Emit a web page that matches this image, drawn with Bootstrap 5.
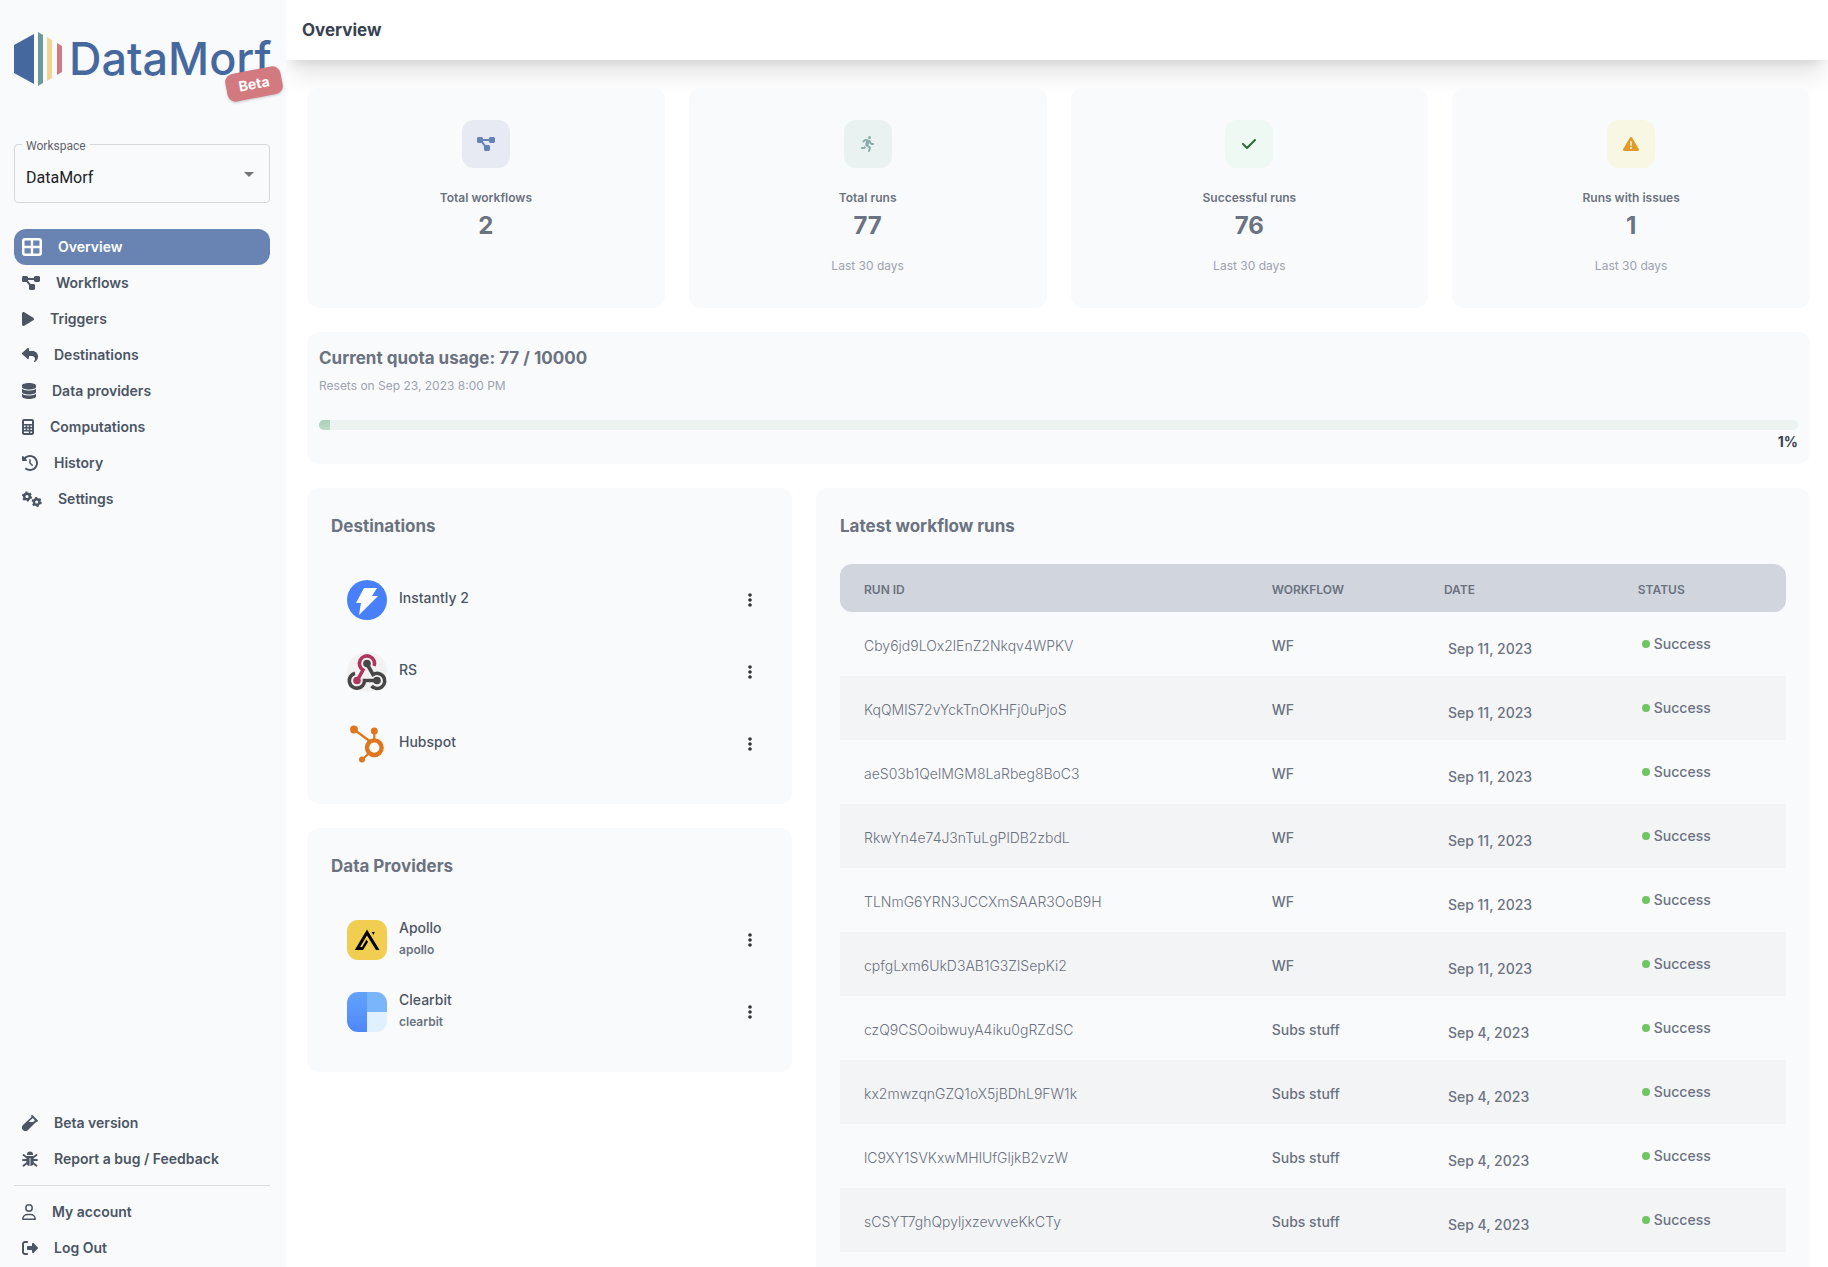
<!DOCTYPE html>
<html lang="en">
<head>
<meta charset="utf-8">
<meta name="viewport" content="width=device-width, initial-scale=1">
<title>DataMorf - Overview</title>
<link href="https://cdn.jsdelivr.net/npm/bootstrap@5.3.0/dist/css/bootstrap.min.css" rel="stylesheet">
<style>
  body { font-family: Inter, "Noto Sans", sans-serif; font-size: 14px; line-height: 20px; color: #6b7280; background: #fff; }
  svg { display: block; flex: none; }
  .app-shell { height: 100vh; overflow: hidden; }
  .side-panel { width: 286px; flex: none; background: #f9fafc; padding: 32px 16px 1px 14px; }
  .brand { height: 54px; margin-bottom: 58px; gap: 6px; }
  .brand-text { font-size: 45px; line-height: 54px; font-weight: 500; color: #45689f; }
  .beta-tag { top: 38px; right: -12px; width: 56px; height: 28px; line-height: 28px; border-radius: 8px; background: #d37a80; color: #fff; font-weight: 700; transform: rotate(-11deg); box-shadow: 0 1px 3px rgba(0,0,0,.2); text-align: center; }
  .ws-box { margin-bottom: 26px; }
  .ws-select { height: 59px; border: 1px solid #d5d7da; border-radius: 4px; background: transparent; appearance: none; padding: 8px 40px 0 11px; font: 16px/24px Roboto, sans-serif; color: #202124; }
  .ws-label { left: 8px; top: -7px; padding: 0 4px; background: #f9fafc; font: 12px/18px Roboto, sans-serif; color: #5f6368; }
  .ws-arrow { right: 15px; top: 28px; pointer-events: none; }
  .side-nav .nav-link { height: 36px; padding: 0 8px; gap: 16px; display: flex; align-items: center; border-radius: 12px; font-weight: 600; color: #4b5563; }
  .side-nav .nav-link.active { background: #6984b2; color: #fff; }
  .side-nav svg, .stat-icon svg { fill: currentColor; }
  .side-rule { margin: 8px 0; border-top: 1px solid #d9dce1; opacity: 1; }
  .top-bar { height: 60px; flex: none; padding: 0 16px; background: #fff; box-shadow: 0 20px 25px -5px rgba(0,0,0,.1), 0 8px 10px -6px rgba(0,0,0,.1); }
  .top-bar h1 { font-size: 17px; line-height: 28px; font-weight: 700; color: #374151; margin: 0; }
  .content-area { position: relative; padding: 28px 18px 24px 21px; display: flex; flex-direction: column; gap: 24px; }
  .panel { background: #f9fafc; border-radius: 12px; }
  .panel-title { font-size: 17px; line-height: 28px; font-weight: 700; color: #6b7280; margin: 0; }
  .stat-panel { height: 220px; padding-top: 32px; text-align: center; font-size: 12px; line-height: 16px; }
  .stat-icon { width: 48px; height: 48px; border-radius: 12px; margin: 0 auto 22px; display: flex; align-items: center; justify-content: center; }
  .stat-name { font-weight: 600; }
  .stat-value { font-size: 24px; line-height: 32px; font-weight: 700; margin: 4px 0 16px; }
  .muted-note { font-size: 12px; line-height: 16px; color: #9ca3af; font-weight: 400; }
  .quota-panel { padding: 12px; height: 132px; }
  .quota-note { margin-top: 6px; }
  .quota-track { height: 10px; border-radius: 5px; background: #ebf2ef; margin-top: 26px; }
  .quota-fill { background: linear-gradient(#a9d0b6, #bfdcc8); }
  .quota-pct { color: #374151; font-weight: 700; text-align: right; margin-top: 2px; }
  .conn-row { height: 72px; padding: 0 6px 0 16px; gap: 12px; color: #4b5563; font-weight: 500; }
  .conn-sub { font-size: 12px; line-height: 24px; color: #6b7280; font-weight: 600; }
  .dots-btn { width: 24px; height: 40px; border: 0; background: none; padding: 0; display: flex; align-items: center; justify-content: center; }
  .runs-table { width: 100%; table-layout: fixed; border-collapse: separate; border-spacing: 0; font-weight: 500; }
  .runs-table th { height: 48px; padding: 4px 24px 0; background: #d1d5dd; font-size: 12px; font-weight: 600; }
  .runs-table th:first-child { border-radius: 12px 0 0 12px; }
  .runs-table th:last-child { border-radius: 0 12px 12px 0; }
  .runs-table td { height: 64px; padding: 4px 24px 0; vertical-align: middle; }
  .runs-table tbody tr:nth-child(even) td { background: #f3f4f6; }
  .runs-table td:first-child { font-weight: 300; }
  .runs-table td:nth-child(3) { padding: 10px 28px 0; }
  .runs-table td:nth-child(4) { padding: 0 28px 0; }
  .ok-dot { display: inline-block; width: 8px; height: 8px; border-radius: 50%; background: #70c463; margin-right: 4px; vertical-align: 1px; }
</style>
<script src="https://cdn.jsdelivr.net/npm/bootstrap@5.3.0/dist/js/bootstrap.bundle.min.js"></script>
</head>
<body>
<svg width="0" height="0" class="position-absolute" aria-hidden="true">
  <symbol id="i-flow" viewBox="0 0 576 512"><path d="M0 80C0 53.500 21.500 32 48 32h96c26.500 0 48 21.500 48 48V96H384V80c0-26.500 21.500-48 48-48h96c26.500 0 48 21.500 48 48v96c0 26.500-21.500 48-48 48H432c-26.500 0-48-21.500-48-48V160H192v16c0 1.700-.1 3.400-.3 5L272 288h96c26.500 0 48 21.500 48 48v96c0 26.500-21.500 48-48 48H272c-26.500 0-48-21.500-48-48V336c0-1.700.1-3.400.3-5L144 224H48c-26.500 0-48-21.500-48-48V80z"/></symbol>
  <symbol id="i-dots" viewBox="0 0 4 16"><circle cx="2" cy="3" r="1.800"/><circle cx="2" cy="8" r="1.800"/><circle cx="2" cy="13" r="1.800"/></symbol>
</svg>
<div class="app-shell d-flex">
  <aside class="side-panel d-flex flex-column">
    <div class="brand d-flex position-relative">
      <svg width="49" height="54" viewBox="0 0 49 54"><path fill="#45689f" d="M0 13 20 2v50L0 41z"/><path fill="#6c9a97" d="M24 0l5 3v48l-5 3z"/><path fill="#f1d592" d="M33 5l5 3v38l-5 3z"/><path fill="#d37a80" d="M43 11l5 3v26l-5 3z"/></svg>
      <span class="brand-text">DataMorf</span>
      <span class="beta-tag position-absolute">Beta</span>
    </div>
    <div class="ws-box position-relative">
      <label class="ws-label position-absolute" for="workspace">Workspace</label>
      <select class="ws-select w-100" id="workspace"><option>DataMorf</option></select>
      <svg class="ws-arrow position-absolute" width="12" height="6" viewBox="0 0 12 6"><path fill="#757575" d="M1 0h10L6 5z"/></svg>
    </div>
    <nav class="side-nav nav flex-column">
      <a class="nav-link active" href="#"><svg width="20" height="18" viewBox="0 0 20 18"><path fill-rule="evenodd" d="M3 0h14a3 3 0 0 1 3 3v12a3 3 0 0 1-3 3H3a3 3 0 0 1-3-3V3a3 3 0 0 1 3-3zM2.500 3v4.800h6.300V2.500H3zM11.200 2.500v5.300h6.300V3L17 2.500zM2.500 10.200V15l.5.500h5.800v-5.300zM11.200 10.200v5.300H17l.5-.5v-4.800z"/></svg>Overview</a>
      <a class="nav-link" href="#"><svg width="18" height="16"><use href="#i-flow"/></svg>Workflows</a>
      <a class="nav-link" href="#"><svg width="12" height="16" viewBox="0 0 384 512"><path d="M73 39c-14.800-9.100-33.400-9.400-48.500-.9S0 62.600 0 80V432c0 17.400 9.400 33.400 24.500 41.900s33.700 8.100 48.500-.9L361 297c14.300-8.700 23-24.200 23-41s-8.700-32.200-23-41L73 39z"/></svg>Triggers</a>
      <a class="nav-link" href="#"><svg width="16" height="16" viewBox="0 0 512 512"><path d="M205 34.800c11.500 5.100 19 16.600 19 29.200v64H336c97.200 0 176 78.800 176 176c0 113.300-81.500 163.900-100.200 174.100c-2.500 1.400-5.300 1.900-8.100 1.900c-10.900 0-19.700-8.900-19.700-19.700c0-7.500 4.300-14.400 9.800-19.500c9.400-8.800 22.200-26.400 22.200-56.700c0-53-43-96-96-96H224v64c0 12.600-7.400 24.100-19 29.200s-25 3-34.400-5.400l-160-144C3.900 225.700 0 217.100 0 208s3.900-17.700 10.600-23.800l160-144c9.400-8.500 22.900-10.600 34.400-5.400z"/></svg>Destinations</a>
      <a class="nav-link" href="#"><svg width="14" height="16" viewBox="0 0 448 512"><path d="M448 80v48c0 44.200-100.300 80-224 80S0 172.200 0 128V80C0 35.800 100.300 0 224 0S448 35.800 448 80zM393.200 214.700c20.800-7.400 39.900-16.900 54.800-28.600V288c0 44.200-100.300 80-224 80S0 332.200 0 288V186.100c14.900 11.800 34 21.200 54.800 28.600C99.700 230.700 159.500 240 224 240s124.300-9.300 169.200-25.300zM0 346.100c14.900 11.800 34 21.200 54.800 28.600C99.700 390.700 159.500 400 224 400s124.300-9.300 169.200-25.300c20.800-7.400 39.900-16.900 54.800-28.600V432c0 44.200-100.300 80-224 80S0 476.200 0 432V346.100z"/></svg>Data providers</a>
      <a class="nav-link" href="#"><svg width="12" height="16" viewBox="0 0 384 512"><path fill-rule="evenodd" d="M64 0C28.700 0 0 28.700 0 64V448c0 35.300 28.700 64 64 64H320c35.300 0 64-28.700 64-64V64c0-35.300-28.700-64-64-64zM64 64H320v96H64zM64 208h50v50H64zM167 208h50v50h-50zM270 208h50v50h-50zM64 303h50v50H64zM167 303h50v50h-50zM270 303h50v50h-50zM64 398h153v50H64zM270 398h50v50h-50z"/></svg>Computations</a>
      <a class="nav-link" href="#"><svg width="16" height="16" viewBox="0 0 512 512"><path d="M75 75L41 41C25.900 25.900 0 36.600 0 57.900V168c0 13.300 10.700 24 24 24H134.100c21.400 0 32.100-25.900 17-41l-30.800-30.800C155 85.500 203 64 256 64c106 0 192 86 192 192s-86 192-192 192c-40.800 0-78.600-12.700-109.700-34.400c-14.500-10.100-34.400-6.600-44.600 7.900s-6.600 34.400 7.900 44.600C151.200 495 201.700 512 256 512c141.400 0 256-114.600 256-256S397.400 0 256 0C185.300 0 121.300 28.700 75 75zm181 53c-13.300 0-24 10.700-24 24V256c0 6.400 2.500 12.500 7 17l72 72c9.400 9.400 24.600 9.400 33.900 0s9.400-24.600 0-33.900l-65-65V152c0-13.300-10.700-24-24-24z"/></svg>History</a>
      <a class="nav-link" href="#"><svg width="20" height="16" viewBox="0 0 20 16"><g fill="none" stroke="currentColor"><circle cx="5" cy="5.500" r="2.800" stroke-width="2.400"/><circle cx="5" cy="5.500" r="4.200" stroke-width="1.800" stroke-dasharray="2.200 2.200"/><circle cx="14.700" cy="11" r="2.800" stroke-width="2.400"/><circle cx="14.700" cy="11" r="4.200" stroke-width="1.800" stroke-dasharray="2.200 2.200"/></g></svg>Settings</a>
    </nav>
    <nav class="side-nav nav flex-column mt-auto">
      <a class="nav-link" href="#"><svg width="16" height="16" viewBox="0 0 16 16"><path fill-rule="evenodd" d="M9.300.3a1 1 0 0 1 1.400 0l5 5a1 1 0 0 1-1.400 1.400L6 15a3.500 3.500 0 0 1-5-5l8.700-8.300a1 1 0 0 1-.4-1.400zM6.600 7h4.600l1.700-1.700L10.700 3.100z"/></svg>Beta version</a>
      <a class="nav-link" href="#"><svg width="16" height="16" viewBox="0 0 16 16"><path d="M5 3.500a3 3 0 0 1 6 0V4H5z"/><path d="M4.500 5h7v6.500a3.500 3.500 0 0 1-7 0z"/><g fill="none" stroke="currentColor" stroke-width="1.800" stroke-linecap="round"><path d="M1.500 4l3.500 2.500M14.500 4l-3.500 2.500M1 9h14M1.500 14.800L5 12M14.500 14.800L11 12"/></g><path fill="#f9fafc" d="M7.600 7h.8v8h-.8z"/></svg>Report a bug / Feedback</a>
      <hr class="side-rule">
      <a class="nav-link" href="#"><svg width="14" height="16" viewBox="0 0 14 16"><g fill="none" stroke="currentColor" stroke-width="1.500"><circle cx="7" cy="4" r="3.200"/><path d="M.8 15.200c0-3 2.200-4.700 4.700-4.700h3c2.500 0 4.700 1.700 4.700 4.700z" stroke-linejoin="round"/></g></svg>My account</a>
      <a class="nav-link" href="#"><svg width="16" height="16" viewBox="0 0 512 512"><path d="M377.900 105.900L500.700 228.700c7.200 7.200 11.300 17.100 11.300 27.300s-4.100 20.100-11.300 27.300L377.900 406.100c-6.400 6.400-15 9.900-24 9.900c-18.700 0-33.900-15.200-33.900-33.900V320H192c-17.700 0-32-14.300-32-32V224c0-17.700 14.300-32 32-32H320V129.900c0-18.700 15.200-33.900 33.900-33.900c9 0 17.600 3.600 24 9.900zM160 96H96c-17.700 0-32 14.300-32 32V384c0 17.700 14.300 32 32 32h64c17.700 0 32 14.300 32 32s-14.300 32-32 32H96c-53 0-96-43-96-96V128C0 75 43 32 96 32h64c17.700 0 32 14.300 32 32s-14.300 32-32 32z"/></svg>Log Out</a>
    </nav>
  </aside>

  <div class="flex-grow-1 overflow-hidden">
    <header class="top-bar d-flex align-items-center"><h1>Overview</h1></header>
    <main class="content-area">
      <div class="row row-cols-4 gx-4">
        <div class="col"><section class="panel stat-panel">
          <div class="stat-icon" style="background:#e7eaf2;color:#6583b5"><svg width="18" height="16"><use href="#i-flow"/></svg></div>
          <div class="stat-name">Total workflows</div><div class="stat-value">2</div>
        </section></div>
        <div class="col"><section class="panel stat-panel">
          <div class="stat-icon" style="background:#eaf1f1;color:#8aadab"><svg width="14" height="16" viewBox="0 0 448 512"><path d="M320 48a48 48 0 1 0-96 0 48 48 0 1 0 96 0zM125.700 175.500c9.900-9.900 23.400-15.500 37.500-15.500c1.900 0 3.800.1 5.600.3L137.600 254c-9.300 28 1.700 58.800 26.800 74.500l86.200 53.900-25.400 88.800c-4.900 17 5 34.700 22 39.600s34.700-5 39.600-22l28.700-100.400c5.900-20.600-2.600-42.600-20.700-53.900L238 299l30.900-82.400 5.100 12.300C289 264.700 323.900 288 362.700 288H384c17.700 0 32-14.300 32-32s-14.300-32-32-32H362.700c-12.900 0-24.600-7.800-29.500-19.700l-6.300-15c-14.600-35.100-44.100-61.900-80.500-73.100l-48.700-15c-11.100-3.400-22.700-5.200-34.400-5.200c-31 0-60.800 12.300-82.700 34.300L57.400 153.400c-12.500 12.500-12.500 32.800 0 45.300s32.800 12.500 45.300 0l23.100-23.100zM91.200 352H32c-17.700 0-32 14.300-32 32s14.300 32 32 32h69.600c19 0 36.200-11.200 43.900-28.500L157 361.600l-9.500-6c-17.500-10.900-30.500-26.800-37.900-44.900L91.200 352z"/></svg></div>
          <div class="stat-name">Total runs</div><div class="stat-value">77</div><div class="muted-note">Last 30 days</div>
        </section></div>
        <div class="col"><section class="panel stat-panel">
          <div class="stat-icon" style="background:#eff9f3;color:#2f6b34"><svg width="14" height="16" viewBox="0 0 448 512"><path d="M438.600 105.400c12.500 12.500 12.500 32.800 0 45.300l-256 256c-12.500 12.500-32.800 12.500-45.300 0l-128-128c-12.500-12.500-12.500-32.800 0-45.300s32.800-12.500 45.300 0L160 338.700 393.400 105.400c12.500-12.500 32.800-12.500 45.300 0z"/></svg></div>
          <div class="stat-name">Successful runs</div><div class="stat-value">76</div><div class="muted-note">Last 30 days</div>
        </section></div>
        <div class="col"><section class="panel stat-panel">
          <div class="stat-icon" style="background:#f8f7e3;color:#e09b2b"><svg width="16" height="16" viewBox="0 0 512 512"><path d="M256 32c14.200 0 27.300 7.500 34.500 19.800l216 368c7.300 12.400 7.300 27.700.2 40.100S486.300 480 472 480H40c-14.300 0-27.600-7.700-34.700-20.100s-7-27.800.2-40.100l216-368C228.700 39.500 241.800 32 256 32zm0 128c-13.300 0-24 10.700-24 24V296c0 13.300 10.700 24 24 24s24-10.700 24-24V184c0-13.300-10.700-24-24-24zm32 224a32 32 0 1 0-64 0 32 32 0 1 0 64 0z"/></svg></div>
          <div class="stat-name">Runs with issues</div><div class="stat-value">1</div><div class="muted-note">Last 30 days</div>
        </section></div>
      </div>

      <section class="panel quota-panel">
        <h2 class="panel-title">Current quota usage: 77 / 10000</h2>
        <div class="muted-note quota-note">Resets on Sep 23, 2023 8:00 PM</div>
        <div class="progress quota-track" role="progressbar" aria-label="Quota" aria-valuenow="77" aria-valuemin="0" aria-valuemax="10000"><div class="progress-bar quota-fill" style="width:0.77%"></div></div>
        <div class="quota-pct">1%</div>
      </section>

      <div class="row gx-4">
        <div class="col-4 d-flex flex-column gap-4">
          <section class="panel p-4">
            <h2 class="panel-title mb-4">Destinations</h2>
            <div class="conn-row d-flex align-items-center">
              <svg width="40" height="40" viewBox="0 0 40 40"><circle cx="20" cy="20" r="20" fill="#4880fb"/><path fill="#fff" d="M17 8h13l-5 8h6L12 35l2-12H9z"/></svg>
              <div class="flex-grow-1 mb-1">Instantly 2</div>
              <button class="dots-btn" type="button" aria-label="Instantly 2 options"><svg width="4" height="16" fill="#333"><use href="#i-dots"/></svg></button>
            </div>
            <div class="conn-row d-flex align-items-center">
              <svg width="40" height="40" viewBox="0 0 40 40"><circle cx="20" cy="20" r="20" fill="#f2f2f2"/><g fill="none" stroke-width="3.600"><path stroke="#b0355f" d="M27.200 14A7.600 7.600 0 1 0 16 18L10.500 28"/><path stroke="#474747" d="M20 12l6 10.500A7.600 7.600 0 1 1 24.500 34"/><path stroke="#474747" d="M8 21.200A7.600 7.600 0 1 0 17.500 28.500H30"/></g><circle cx="20" cy="11.500" r="3.800" fill="#474747"/><circle cx="10" cy="28.500" r="3.800" fill="#b0355f"/><circle cx="30" cy="28.500" r="3.800" fill="#474747"/></svg>
              <div class="flex-grow-1 mb-1">RS</div>
              <button class="dots-btn" type="button" aria-label="RS options"><svg width="4" height="16" fill="#333"><use href="#i-dots"/></svg></button>
            </div>
            <div class="conn-row d-flex align-items-center">
              <svg width="40" height="40" viewBox="0 0 40 40"><g fill="none" stroke="#dd761c"><circle cx="27.300" cy="23.700" r="7.300" stroke-width="4.400"/><path stroke-width="2.200" d="M7 5.500 22.500 17M27.300 7v10M15 36l7-7"/></g><g fill="#dd761c"><circle cx="7" cy="5.500" r="3.900"/><circle cx="27.300" cy="7" r="3.500"/><circle cx="15" cy="35.500" r="3"/></g></svg>
              <div class="flex-grow-1 mb-1">Hubspot</div>
              <button class="dots-btn" type="button" aria-label="Hubspot options"><svg width="4" height="16" fill="#333"><use href="#i-dots"/></svg></button>
            </div>
          </section>
          <section class="panel p-4">
            <h2 class="panel-title mb-4">Data Providers</h2>
            <div class="conn-row d-flex align-items-center">
              <svg width="40" height="40" viewBox="0 0 40 40"><rect width="40" height="40" rx="11" fill="#f1cd50"/><path d="M20 9.500 32.500 30H29L20 15.500 13 27h2.200l4.300-7.500 1.500 2.500-5 8H7.800z"/><path d="M24.800 12h3l-1.500 3z"/></svg>
              <div class="flex-grow-1"><div>Apollo</div><div class="conn-sub">apollo</div></div>
              <button class="dots-btn" type="button" aria-label="Apollo options"><svg width="4" height="16" fill="#333"><use href="#i-dots"/></svg></button>
            </div>
            <div class="conn-row d-flex align-items-center">
              <svg width="40" height="40" viewBox="0 0 40 40"><defs><linearGradient id="cb" x1="0" y1="0" x2="0" y2="1"><stop offset="0" stop-color="#62a3fa"/><stop offset="1" stop-color="#4f87fb"/></linearGradient><clipPath id="cc"><rect width="40" height="40" rx="11"/></clipPath></defs><g clip-path="url(#cc)"><path fill="url(#cb)" d="M0 0h20v40H0z"/><path fill="#7ab4fb" d="M20 0h20v20H20z"/><path fill="#e1f0ff" d="M20 20h20v20H20z"/></g></svg>
              <div class="flex-grow-1"><div>Clearbit</div><div class="conn-sub">clearbit</div></div>
              <button class="dots-btn" type="button" aria-label="Clearbit options"><svg width="4" height="16" fill="#333"><use href="#i-dots"/></svg></button>
            </div>
          </section>
        </div>
        <div class="col-8">
          <section class="panel p-4">
            <h2 class="panel-title mb-4">Latest workflow runs</h2>
            <table class="runs-table">
              <colgroup><col style="width:43.1%"><col style="width:18.2%"><col style="width:20.5%"><col style="width:18.2%"></colgroup>
              <thead><tr><th scope="col">RUN ID</th><th scope="col">WORKFLOW</th><th scope="col">DATE</th><th scope="col">STATUS</th></tr></thead>
              <tbody>
                <tr><td>Cby6jd9LOx2lEnZ2Nkqv4WPKV</td><td>WF</td><td>Sep 11, 2023</td><td><span class="ok-dot"></span>Success</td></tr>
                <tr><td>KqQMlS72vYckTnOKHFj0uPjoS</td><td>WF</td><td>Sep 11, 2023</td><td><span class="ok-dot"></span>Success</td></tr>
                <tr><td>aeS03b1QelMGM8LaRbeg8BoC3</td><td>WF</td><td>Sep 11, 2023</td><td><span class="ok-dot"></span>Success</td></tr>
                <tr><td>RkwYn4e74J3nTuLgPlDB2zbdL</td><td>WF</td><td>Sep 11, 2023</td><td><span class="ok-dot"></span>Success</td></tr>
                <tr><td>TLNmG6YRN3JCCXmSAAR3OoB9H</td><td>WF</td><td>Sep 11, 2023</td><td><span class="ok-dot"></span>Success</td></tr>
                <tr><td>cpfgLxm6UkD3AB1G3ZlSepKi2</td><td>WF</td><td>Sep 11, 2023</td><td><span class="ok-dot"></span>Success</td></tr>
                <tr><td>czQ9CSOoibwuyA4iku0gRZdSC</td><td>Subs stuff</td><td>Sep 4, 2023</td><td><span class="ok-dot"></span>Success</td></tr>
                <tr><td>kx2mwzqnGZQ1oX5jBDhL9FW1k</td><td>Subs stuff</td><td>Sep 4, 2023</td><td><span class="ok-dot"></span>Success</td></tr>
                <tr><td>lC9XY1SVKxwMHlUfGljkB2vzW</td><td>Subs stuff</td><td>Sep 4, 2023</td><td><span class="ok-dot"></span>Success</td></tr>
                <tr><td>sCSYT7ghQpyljxzevvveKkCTy</td><td>Subs stuff</td><td>Sep 4, 2023</td><td><span class="ok-dot"></span>Success</td></tr>
              </tbody>
            </table>
          </section>
        </div>
      </div>
    </main>
  </div>
</div>
</body>
</html>
